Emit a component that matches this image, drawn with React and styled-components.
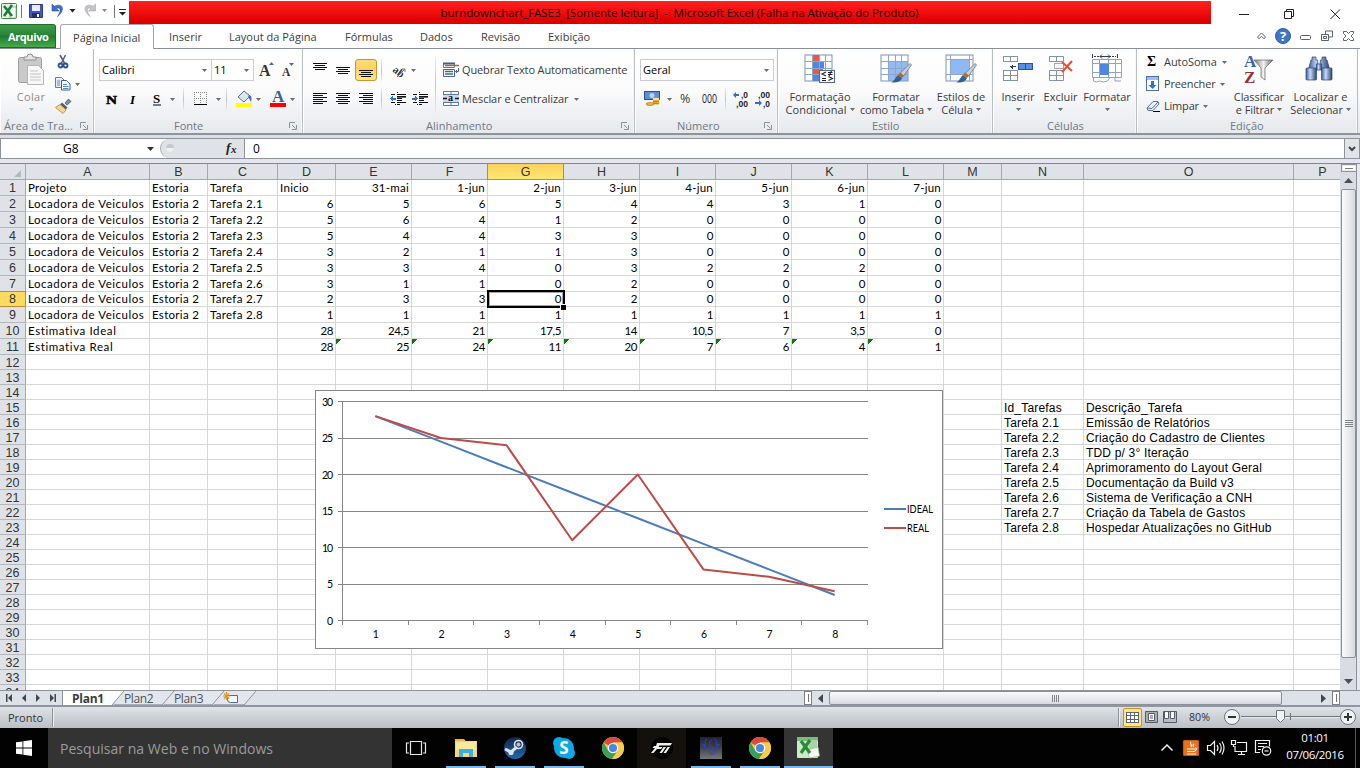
import React from "react";
import styled, { createGlobalStyle, css } from "styled-components";

const UI = `"Open Sans", "Noto Sans", sans-serif`;
const GRID = `Lato, "Open Sans", sans-serif`;
const ARIAL = `"Liberation Sans", Arial, sans-serif`;
const SERIF = `"Liberation Serif", "Times New Roman", serif`;

const Global = createGlobalStyle`
  * { box-sizing: border-box; }
  body { margin: 0; background: #fff; overflow: hidden; }
  svg { display: block; flex: none; overflow: visible; }
`;

const Window = styled.div`
  width: 1360px;
  height: 768px;
  display: flex;
  flex-direction: column;
  overflow: hidden;
  font: 11px/14px ${UI};
  color: #3b3b3b;
  background: #fff;
`;

/* ---------- title bar ---------- */
const TitleBar = styled.header`
  height: 24px;
  display: flex;
  align-items: flex-start;
`;
const QuickAccess = styled.div`
  width: 129px;
  height: 24px;
`;
const Caption = styled.div`
  width: 1082px;
  height: 23px;
  margin-top: 1px;
  background: linear-gradient(#ff2020, #f01010 45%, #dc0000 90%, #d00);
  color: #1c0404;
  font-size: 11.5px;
  line-height: 24px;
  letter-spacing: -0.06px;
  text-align: center;
  white-space: pre;
  padding-left: 19px;
`;
const WindowButtons = styled.div`
  width: 149px;
  height: 24px;
`;

/* ---------- ribbon tabs ---------- */
const TabRow = styled.nav`
  height: 25px;
  display: flex;
  align-items: flex-end;
  border-bottom: 1px solid #8b9097;
`;
const FileTab = styled.div`
  width: 56px;
  height: 24px;
  border-radius: 0 3px 0 0;
  border: 1px solid #1e6b2c;
  border-left: 0;
  background: linear-gradient(#3f9c47, #2a8537 45%, #1f7a2e 50%, #46ac4c);
  color: #fff;
  font-weight: 700;
  line-height: 23px;
  padding-left: 8px;
  letter-spacing: -0.4px;
`;
const RibbonTab = styled.div`
  width: ${(p) => p.$w}px;
  height: 24px;
  line-height: 26px;
  letter-spacing: ${(p) => p.$ls || 0}px;
  white-space: nowrap;
  ${(p) =>
    p.$active &&
    css`
      margin: 0 15px -1px 4px;
      padding-left: 12px;
      height: 25px;
      border: 1px solid #a3a8ae;
      border-bottom: 0;
      border-radius: 3px 3px 0 0;
      background: #fff;
      line-height: 25px;
    `}
`;
const TabTools = styled.div`
  margin-left: auto;
  width: 110px;
  height: 24px;
`;

/* ---------- ribbon ---------- */
const Ribbon = styled.section`
  height: 86px;
  display: flex;
  background: linear-gradient(#fff, #fbfbfc 50%, #eef0f3 78%, #e6e9ed);
  border-bottom: 2px solid #8f949b;
`;
const Group = styled.div`
  width: ${(p) => p.$w}px;
  height: 84px;
  display: flex;
  flex-direction: column;
  border-right: 1px solid #b9bdc4;
  box-shadow: inset -1px 0 #f6f7f9, inset 1px 0 #fff;
`;
const GroupBody = styled.div`
  height: 69px;
  display: flex;
  padding-left: ${(p) => p.$pl || 0}px;
`;
const GroupLabel = styled.div`
  height: 15px;
  display: flex;
  align-items: center;
  justify-content: space-between;
  color: #6f7782;
  padding-right: 5px;
`;
const LabelText = styled.span`
  padding-left: ${(p) => p.$x}px;
  letter-spacing: ${(p) => p.$ls || 0}px;
  white-space: nowrap;
`;
const Stack = styled.div`
  display: flex;
  flex-direction: column;
  width: ${(p) => p.$w}px;
  padding-top: ${(p) => p.$pt || 0}px;
  flex: none;
`;
const Strip = styled.div`
  height: ${(p) => p.$h}px;
  display: grid;
  grid-template-columns: ${(p) => p.$cols};
  align-items: center;
`;
const Combo = styled.div`
  width: ${(p) => p.$w}px;
  height: 22px;
  border: 1px solid #c9ccd1;
  background: #fff;
  display: flex;
  align-items: center;
  justify-content: space-between;
  padding: 0 4px 0 2px;
  color: #000;
`;
const ToggleOn = styled.div`
  width: 22px;
  height: 22px;
  border: 1px solid #c29b29;
  border-radius: 3px;
  background: linear-gradient(#fbdc78, #fdd163 45%, #ffe480);
  display: flex;
  justify-content: center;
  align-items: center;
`;
const Divider = styled.i`
  width: 1px;
  height: ${(p) => p.$h}px;
  background: linear-gradient(#e9ebee, #bfc3c9, #e9ebee);
`;
const Percent = styled.span`
  font-size: 12.5px;
  margin-left: -1px;
`;
const BigButton = styled.div`
  width: ${(p) => p.$w}px;
  flex: none;
  display: flex;
  flex-direction: column;
  align-items: center;
  padding-top: 5px;
  color: ${(p) => (p.$dim ? "#8d8d8d" : "#3b3b3b")};
`;
const BigIcon = styled.div`
  width: 32px;
  height: 36px;
  margin-left: ${(p) => p.$ml || 0}px;
`;
const BigLine = styled.div`
  height: 13px;
  line-height: 13px;
  display: flex;
  align-items: center;
  gap: 3px;
  white-space: nowrap;
  letter-spacing: ${(p) => p.$ls || 0}px;
`;
const MenuLine = styled.div`
  height: 22px;
  display: flex;
  align-items: center;
  white-space: nowrap;
  letter-spacing: ${(p) => p.$ls || 0}px;
`;
const MenuIcon = styled.span`
  width: ${(p) => p.$w}px;
  display: flex;
`;
const ArrowGap = styled.span`
  margin-left: ${(p) => p.$w}px;
`;

/* ---------- formula bar ---------- */
const FormulaBar = styled.div`
  height: 28px;
  display: flex;
  border-top: 3px solid #dcdee6;
  border-bottom: 4px solid #e4e5ee;
  box-shadow: inset 0 1px #8e939b, inset 0 -1px #8e939b;
  background: #fff;
`;
const NameBox = styled.div`
  width: 160px;
  height: 21px;
  border-left: 1px solid #8e939b;
  display: flex;
  align-items: center;
  padding-left: 62px;
  gap: 68px;
  font-size: 12px;
  color: #000;
`;
const FxArea = styled.div`
  width: 85px;
  height: 19px;
  margin-top: 1px;
  border-left: 1px solid #a6abb2;
  border-right: 1px solid #8e939b;
  border-radius: 10px 0 0 10px;
  background: #dfe3e8;
`;
const FormulaText = styled.div`
  flex: 1;
  padding-left: 8px;
  line-height: 21px;
  font-size: 12px;
  color: #000;
`;
const ExpandButton = styled.div`
  width: 16px;
  height: 21px;
  border: 1px solid #8e939b;
  background: #e1e5ea;
  display: flex;
  align-items: center;
  justify-content: center;
`;

/* ---------- worksheet ---------- */
const SheetArea = styled.main`
  height: 527px;
  display: flex;
  border-top: 1px solid #83888f;
`;
const Sheet = styled.div`
  position: relative;
  width: 1340px;
  height: 526px;
  overflow: hidden;
  background: #fff;
`;
const Row = styled.div`
  display: flex;
  width: 1400px;
  height: ${(p) => p.$h}px;
`;
const ColHead = styled.div`
  width: ${(p) => p.$w}px;
  height: 16px;
  border-right: 1px solid #a4a8ad;
  border-bottom: 1px solid #a4a8ad;
  background: #dfe3e8;
  font: 12.5px/16px ${ARIAL};
  text-align: center;
  color: #333;
  ${(p) =>
    p.$on &&
    css`
      background: linear-gradient(#fbd15c, #ffe874);
      border-color: #c28a30;
      box-shadow: -1px 0 #c28a30;
    `}
`;
const RowHead = styled.div`
  width: 26px;
  border-right: 1px solid #a4a8ad;
  border-bottom: 1px solid #b4b8bd;
  background: #dfe3e8;
  font: 12.5px/17px ${ARIAL};
  text-align: center;
  color: #333;
  ${(p) =>
    p.$on &&
    css`
      line-height: 15px;
      background: #ffdb61;
      border-color: #c28a30;
      box-shadow: 0 -1px #c28a30;
    `}
`;
const Cell = styled.div`
  width: ${(p) => p.$w}px;
  border-right: 1px solid #d6d6d6;
  border-bottom: 1px solid #d6d6d6;
  font-family: ${GRID};
  font-size: 11.5px;
  line-height: ${(p) => (p.$short ? 14 : 16)}px;
  letter-spacing: ${(p) => p.$ls ?? 0.3}px;
  padding: 0 2px;
  color: #000;
  white-space: nowrap;
  text-align: ${(p) => (p.$num ? "right" : "left")};
  ${(p) =>
    p.$arial &&
    css`
      font: 12px/16px ${ARIAL};
      letter-spacing: 0.18px;
    `}
  ${(p) =>
    p.$flag &&
    css`
      background: linear-gradient(135deg, #0a7a0a 3.9px, transparent 4px);
    `}
`;
const Selection = styled.div`
  position: absolute;
  left: 487px;
  top: 126px;
  width: 78px;
  height: 18px;
  border: 2px solid #000;
  box-shadow: inset 0 0 0 1px rgba(0, 0, 0, 0.35);
`;
const FillHandle = styled.i`
  position: absolute;
  right: -3px;
  bottom: -4px;
  width: 6px;
  height: 6px;
  background: #000;
  border-left: 1px solid #fff;
  border-top: 1px solid #fff;
`;
const ChartFrame = styled.div`
  position: absolute;
  left: 315px;
  top: 226px;
  width: 628px;
  height: 259px;
  border: 1px solid #868686;
  background: #fff;
`;
const VScroll = styled.div`
  width: 20px;
  height: 526px;
  display: flex;
  flex-direction: column;
  align-items: center;
  background: #d9dde3;
  border-right: 3px solid #e6e8f0;
  box-shadow: inset -1px 0 #8e939b;
`;
const SplitTop = styled.div`
  width: 16px;
  height: 8px;
  border: 1px solid #8e939b;
  background: #fff;
  box-shadow: inset 0 0 0 1px #e6e8ec;
  display: flex;
  align-items: center;
  justify-content: center;
`;
const VButton = styled.div`
  width: 16px;
  height: ${(p) => p.$h}px;
  padding-top: ${(p) => p.$pt || 0}px;
  display: flex;
  align-items: center;
  justify-content: center;
`;
const VThumb = styled.div`
  width: 15px;
  height: 469px;
  border: 1px solid #8b9097;
  border-radius: 2px;
  background: linear-gradient(90deg, #fafbfc, #eceef1 45%, #d5d9df);
  display: flex;
  align-items: center;
  justify-content: center;
`;

/* ---------- sheet tabs ---------- */
const BottomBar = styled.div`
  height: 17px;
  display: flex;
  border-top: 1px solid #8e939b;
  border-bottom: 2px solid #8e95a5;
  background: #dde1e8;
`;
const TabNav = styled.div`
  width: 63px;
  height: 14px;
  border-right: 1px solid #8e939b;
`;
const SheetTab = styled.div`
  position: relative;
  z-index: ${(p) => p.$z};
  width: ${(p) => p.$w}px;
  height: 14px;
  padding-left: ${(p) => p.$pl}px;
  font-size: 12px;
  line-height: 15px;
  letter-spacing: ${(p) => p.$ls}px;
  font-weight: ${(p) => (p.$active ? 700 : 400)};
  color: ${(p) => (p.$active ? "#3d3d3d" : "#4d545d")};
  > svg {
    position: absolute;
    left: 0;
    top: 0;
  }
  > span {
    position: relative;
  }
`;
const HScroll = styled.div`
  margin-left: auto;
  width: 556px;
  height: 14px;
  display: flex;
  align-items: center;
`;
const SplitSide = styled.div`
  width: 8px;
  height: 14px;
  flex: none;
  border: 1px solid #7d8289;
  background: #fff;
  display: flex;
  align-items: center;
  justify-content: center;
`;
const HButton = styled.div`
  width: ${(p) => p.$w}px;
  padding-right: ${(p) => p.$pr || 0}px;
  flex: none;
  display: flex;
  justify-content: ${(p) => (p.$end ? "flex-end" : "center")};
`;
const HThumb = styled.div`
  width: 453px;
  height: 14px;
  flex: none;
  border: 1px solid #8b9097;
  border-radius: 2px;
  background: linear-gradient(#f8f9fb, #e9ecf0 50%, #d6dae0);
  display: flex;
  align-items: center;
  justify-content: center;
`;

/* ---------- status bar ---------- */
const StatusBar = styled.footer`
  height: 21px;
  display: flex;
  align-items: center;
  background: linear-gradient(#dfe2e6, #cdd1d6 50%, #bbbfc4);
  padding-left: 8px;
  color: #333;
`;
const StatusText = styled.span`
  width: 44px;
  line-height: 13px;
  padding-bottom: 1px;
`;
const StatusDivider = styled.i`
  width: 2px;
  height: 19px;
  background: #8e939a;
  border-right: 1px solid #eceef0;
`;
const StatusRight = styled.div`
  margin-left: auto;
  width: 242px;
  height: 21px;
  display: flex;
  align-items: center;
`;
const ViewOn = styled.div`
  width: 19px;
  height: 19px;
  margin: 0 -1px 0 3px;
  border: 1px solid #c2932a;
  border-radius: 2px;
  background: linear-gradient(#fde38c, #ffe680);
  display: flex;
  align-items: center;
  justify-content: center;
`;

/* ---------- taskbar ---------- */
const Taskbar = styled.div`
  height: 40px;
  display: flex;
  background: #020202;
  color: #fff;
`;
const Start = styled.div`
  width: 48px;
  padding: 12px 16px;
`;
const Search = styled.div`
  width: 344px;
  background: #333;
  color: #9b9b9b;
  font-size: 14px;
  line-height: 41px;
  padding-left: 12px;
  letter-spacing: 0.03px;
`;
const TaskButton = styled.div`
  width: 49px;
  height: 40px;
  display: flex;
  flex-direction: column;
  align-items: center;
  padding-top: 8px;
  background: ${(p) => p.$bg || "transparent"};
`;
const RunMark = styled.i`
  width: ${(p) => p.$w || 40}px;
  height: 2px;
  margin-top: 6px;
  background: #76b9ed;
`;
const Tray = styled.div`
  margin-left: auto;
  width: 126px;
`;
const Clock = styled.div`
  width: 60px;
  text-align: center;
  font-size: 11.5px;
  line-height: 17px;
  padding-top: 1px;
  letter-spacing: -0.35px;
`;
const DesktopEdge = styled.div`
  width: 5px;
  margin-left: 10px;
  border-left: 1px solid #555;
`;

/* ---------- small drawings ---------- */
const Caret = ({ c = "#6b6b6b" }) => (
  <svg width="5" height="3" viewBox="0 0 5 3"><path d="M0 0h5L2.500 3z" fill={c} /></svg>
);
const Launcher = () => (
  <svg width="8" height="8" viewBox="0 0 8 8" fill="none" stroke="#8d939b">
    <path d="M.5 6V.5H6" /><path d="M3 3l3.500 3.500M7.500 3v4.500H3" />
  </svg>
);
/* Text-line glyph: long and short strokes two pixels apart. */
const Lines = ({ n = 6, top = 0, align = "c" }) => (
  <svg width="14" height="12" shapeRendering="crispEdges">
    {Array.from({ length: n }, (_, i) => {
      const w = i % 2 ? 10 : 14;
      const x = align === "l" ? 0 : align === "r" ? 14 - w : (14 - w) / 2;
      return <rect key={i} x={x} y={top + i * 2} width={w} height="1" fill="#111" />;
    })}
  </svg>
);
const Indent = ({ dir }) => (
  <svg width="16" height="14" shapeRendering="crispEdges">
    <path d="M1 2.500h4M7 2.500h9M7 4.500h9M7 6.500h5M7 8.500h5M1 10.500h4M7 10.500h9M7 12.500h3M7 .5h1M5 12.500h1" stroke="#111" />
    <path d="M7 5.500h9" stroke="#111" strokeOpacity=".6" />
    <path d={dir === "l" ? "M0 6.500l3-3v2h3v2H3v2z" : "M6 6.500l-3-3v2H0v2h3v2z"} fill="#2f6fc4" />
  </svg>
);
const ExcelSmall = () => (
  <g>
    <rect x="1.500" y="3.500" width="15" height="15" rx="1" fill="#e3f1e1" stroke="#3b8a45" />
    <path d="M10 7h6v11h-6z" fill="#fff" stroke="#79b37f" strokeWidth=".8" />
    <path d="M4 6l8 10M12 5L4 16" stroke="#1f7a35" strokeWidth="2.600" />
  </g>
);
const Grid32 = ({ children, over }) => (
  <svg width="32" height="32">
    <rect x="1" y="1" width="27" height="26" fill="#fff" stroke="#7d93b5" />
    {children}
    <path d="M1 7.500h27M1 14.500h27M1 20.500h27M8.500 1v26M15.500 1v26M21.500 1v26" stroke="#8ea6cc" fill="none" />
    {over}
  </svg>
);
const Brush = () => (
  <g>
    <path d="M30 9.500l1.500 1.500-8 11-3.500-2.500z" fill="#c7d0da" stroke="#66758a" strokeWidth=".8" />
    <path d="M20 18.500l4 3-2 2.500-4-3z" fill="#b06a2c" />
    <path d="M18 21l4 3.200c-2 4-6 5-11 4 4-1 4-5 7-7.200z" fill="#35608f" />
  </g>
);
const Binoculars = () => (
  <svg width="32" height="32">
    <defs>
      <linearGradient id="bino"><stop offset="0" stopColor="#3c5c94" /><stop offset=".4" stopColor="#c9d9f2" /><stop offset="1" stopColor="#27457c" /></linearGradient>
    </defs>
    <g fill="url(#bino)" stroke="#28427a" strokeWidth=".7">
      <path d="M7 3h4v3h1.500l1 9H3.500L6 6h1zM17 3h4v3h1l2.500 9H14.500l1-9H17z" />
      <rect x="1" y="14" width="10.500" height="12" rx="1" /><rect x="16.500" y="14" width="10.500" height="12" rx="1" />
      <rect x="11.500" y="10" width="5" height="6" />
    </g>
  </svg>
);
const Chrome = () => (
  <svg width="24" height="24" viewBox="0 0 24 24">
    <circle cx="12" cy="12" r="11" fill="#f4c53a" />
    <path d="M12 12L2.500 6.500A11 11 0 0 1 21.500 6.500H12z" fill="#dc4a3c" />
    <path d="M2.500 6.500A11 11 0 0 0 11 22.950L16.700 14.700 12 12 7.300 14.700z" fill="#34a058" />
    <path d="M21.500 6.500H12l4.700 8.200L11 22.950A11 11 0 0 0 21.500 6.500z" fill="#f8cc45" />
    <circle cx="12" cy="12" r="5.200" fill="#fff" /><circle cx="12" cy="12" r="4.100" fill="#4a86e8" />
  </svg>
);

/* ---------- data ---------- */
const COLS = [["A", 124], ["B", 58], ["C", 70], ["D", 58], ["E", 76], ["F", 76], ["G", 76], ["H", 76], ["I", 76], ["J", 76], ["K", 76], ["L", 76], ["M", 58], ["N", 82], ["O", 210], ["P", 58]];
const P = "Locadora de Veiculos";
const S = "Estoria 2";
const DATA = {
  1: ["Projeto", "Estoria", "Tarefa", "Inicio", "31-mai", "1-jun", "2-jun", "3-jun", "4-jun", "5-jun", "6-jun", "7-jun"],
  2: [P, S, "Tarefa 2.1", 6, 5, 6, 5, 4, 4, 3, 1, 0],
  3: [P, S, "Tarefa 2.2", 5, 6, 4, 1, 2, 0, 0, 0, 0],
  4: [P, S, "Tarefa 2.3", 5, 4, 4, 3, 3, 0, 0, 0, 0],
  5: [P, S, "Tarefa 2.4", 3, 2, 1, 1, 3, 0, 0, 0, 0],
  6: [P, S, "Tarefa 2.5", 3, 3, 4, 0, 3, 2, 2, 2, 0],
  7: [P, S, "Tarefa 2.6", 3, 1, 1, 0, 2, 0, 0, 0, 0],
  8: [P, S, "Tarefa 2.7", 2, 3, 3, 0, 2, 0, 0, 0, 0],
  9: [P, S, "Tarefa 2.8", 1, 1, 1, 1, 1, 1, 1, 1, 1],
  10: ["Estimativa Ideal", "", "", 28, "24,5", 21, "17,5", 14, "10,5", 7, "3,5", 0],
  11: ["Estimativa Real", "", "", 28, 25, 24, 11, 20, 7, 6, 4, 1],
};
const TASKS = [
  ["Id_Tarefas", "Descrição_Tarefa"],
  ["Tarefa 2.1", "Emissão de Relatórios"],
  ["Tarefa 2.2", "Criação do Cadastro de Clientes"],
  ["Tarefa 2.3", "TDD p/ 3° Iteração"],
  ["Tarefa 2.4", "Aprimoramento do Layout Geral"],
  ["Tarefa 2.5", "Documentação da Build v3"],
  ["Tarefa 2.6", "Sistema de Verificação a CNH"],
  ["Tarefa 2.7", "Criação da Tabela de Gastos"],
  ["Tarefa 2.8", "Hospedar Atualizações no GitHub"],
];
TASKS.forEach(([id, d], i) => {
  DATA[15 + i] = [...Array(13).fill(""), id, d];
});
const rowHeight = (n) => (n <= 11 && n !== 8 ? 16 : 15);
const spacing = (n, i, num) => {
  if (num) return n === 1 ? 0.25 : -0.4;
  return i === 0 && n > 1 ? (n > 9 ? 0.6 : 0.52) : 0.3;
};

const IDEAL = [28, 24.5, 21, 17.5, 14, 10.5, 7, 3.5];
const REAL = [28, 25, 24, 11, 20, 7, 6, 4];
const px = (i) => 26.5 + 65.625 * (i + 0.5);
const py = (v) => 229.5 - v * 7.3;
const points = (a) => a.map((v, i) => `${px(i)},${py(v)}`).join(" ");

function Chart() {
  return (
    <ChartFrame>
      <svg width="626" height="257" fontFamily={`Lato, "Open Sans", sans-serif`} fontSize="10.500" fill="#000">
        <g stroke="#868686" shapeRendering="crispEdges">
          {[0, 5, 10, 15, 20, 25, 30].map((v) => (
            <line key={v} x1="22" x2="552" y1={Math.floor(py(v)) + 0.5} y2={Math.floor(py(v)) + 0.5} />
          ))}
          <line x1="26.500" x2="26.500" y1="10" y2="234" />
          {[1, 2, 3, 4, 5, 6, 7, 8].map((i) => (
            <line key={i} x1={Math.floor(26.5 + 65.625 * i) + 0.5} x2={Math.floor(26.5 + 65.625 * i) + 0.5} y1="229" y2="234" />
          ))}
        </g>
        {[0, 5, 10, 15, 20, 25, 30].map((v) => (
          <text key={v} x="17" y={py(v) + 4} textAnchor="end" textLength={v > 5 ? 11 : undefined}>{v}</text>
        ))}
        {IDEAL.map((_, i) => (
          <text key={i} x={px(i) + 0.5} y="247" textAnchor="middle">{i + 1}</text>
        ))}
        <g fill="none" strokeWidth="2" strokeLinejoin="round">
          <polyline points={points(IDEAL)} stroke="#4a7ebb" />
          <polyline points={points(REAL)} stroke="#be4b48" />
          <path d="M568 118h22" stroke="#4a7ebb" /><path d="M568 137h22" stroke="#be4b48" />
        </g>
        <text x="591" y="121.500" textLength="26" lengthAdjust="spacingAndGlyphs">IDEAL</text>
        <text x="591" y="140.500" textLength="22" lengthAdjust="spacingAndGlyphs">REAL</text>
      </svg>
    </ChartFrame>
  );
}

function Worksheet() {
  return (
    <SheetArea>
      <Sheet>
        <Row $h={16}>
          <ColHead $w={26}>
            <svg width="25" height="15"><path d="M21 6v7h-7z" fill="#b4b9bf" /></svg>
          </ColHead>
          {COLS.map(([c, w]) => <ColHead key={c} $w={w} $on={c === "G"}>{c}</ColHead>)}
        </Row>
        {Array.from({ length: 34 }, (_, k) => k + 1).map((n) => (
          <Row key={n} $h={rowHeight(n)}>
            <RowHead $on={n === 8}>{n}</RowHead>
            {COLS.map(([c, w], i) => {
              const v = DATA[n]?.[i] ?? "";
              const num = i >= 3 && i < 12 && !(n === 1 && i === 3);
              return (
                <Cell key={c} $w={w} $num={num} $ls={spacing(n, i, num)} $short={n === 8} $arial={n > 14} $flag={n === 11 && i > 3 && i < 12}>{v}</Cell>
              );
            })}
          </Row>
        ))}
        <Selection><FillHandle /></Selection>
        <Chart />
      </Sheet>
      <VScroll>
        <SplitTop><svg width="8" height="1"><rect width="8" height="1" fill="#777" /></svg></SplitTop>
        <VButton $h={17}><svg width="9" height="5"><path d="M0 5h9L4.500 0z" fill="#4a4f55" /></svg></VButton>
        <VThumb>
          <svg width="8" height="7" shapeRendering="crispEdges"><path d="M0 .5h8M0 2.500h8M0 4.500h8M0 6.500h8" stroke="#82878e" /></svg>
        </VThumb>
        <VButton $h={32} $pt={14}><svg width="9" height="5"><path d="M0 0h9L4.500 5z" fill="#4a4f55" /></svg></VButton>
      </VScroll>
    </SheetArea>
  );
}

function RibbonBar() {
  return (
    <Ribbon>
      <Group $w={94}>
        <GroupBody $pl={7}>
          <BigButton $w={48} $dim>
            <BigIcon>
              <svg width="32" height="32">
                <rect x="3.500" y="3.500" width="23" height="25" rx="2" fill="#c9c9c9" stroke="#9e9e9e" />
                <path d="M9 6V3h3a3 3 0 0 1 6 0h3v3z" fill="#e5e5e5" stroke="#8f8f8f" />
                <path d="M12.500 11.500h11l5 5v14h-16z" fill="#f7f7f7" stroke="#b5b5b5" />
                <path d="M15 17h8M15 20h11M15 23h11M15 26h11" stroke="#c6c6c6" />
              </svg>
            </BigIcon>
            <BigLine $ls={0.3}>Colar</BigLine>
            <BigLine><Caret c="#a8a8a8" /></BigLine>
          </BigButton>
          <Stack $w={36} $pt={2}>
            <Strip $h={22} $cols="24px 1fr">
              <svg width="16" height="16"><path d="M5 1l5 9M10.500 1L6 10" stroke="#51657f" strokeWidth="1.600" /><circle cx="5.500" cy="11.500" r="2" fill="none" stroke="#24509a" strokeWidth="1.800" /><circle cx="10.500" cy="11.500" r="2" fill="none" stroke="#24509a" strokeWidth="1.800" /></svg>
            </Strip>
            <Strip $h={22} $cols="20px 1fr">
              <svg width="16" height="16"><path d="M.5 1.500h6l3 3v7h-9z" fill="#e4edf9" stroke="#5b7fb5" /><path d="M6.500 4.500h5l3.500 3.500v6H6.500z" fill="#fff" stroke="#345f9e" /><path d="M8 8.500h4M8 10.500h5.500M8 12.500h5.500M2 5h3M2 7h3M2 9h3" stroke="#5b8fd0" /></svg>
              <Caret />
            </Strip>
            <Strip $h={22} $cols="24px 1fr">
              <svg width="17" height="16"><path d="M10 5l3.500-4 2.500 2.500-4 3.500z" fill="#7c8fae" stroke="#3f5574" strokeWidth=".8" /><path d="M7 4.500l5.500 5-1.500 2-6-5z" fill="#555b66" /><path d="M5 6.500l6 5.500-3 3.500L.5 9.500z" fill="#f1d694" stroke="#b08a3e" strokeWidth=".8" /></svg>
            </Strip>
          </Stack>
        </GroupBody>
        <GroupLabel><LabelText $x={4} $ls={0.1}>Área de Tra...</LabelText><Launcher /></GroupLabel>
      </Group>

      <Group $w={209}>
        <GroupBody $pl={5}>
          <Stack $w={200} $pt={10}>
            <Strip $h={22} $cols="112px 48px 23px 1fr">
              <Combo $w={113}><span>Calibri</span><Caret /></Combo>
              <Combo $w={43}><span>11</span><Caret /></Combo>
              <svg width="16" height="18"><text x="0" y="15" fontFamily={SERIF} fontSize="16" fontWeight="700" fill="#333">A</text><path d="M10 4l2.500-3L15 4z" fill="#3e6db5" /></svg>
              <svg width="16" height="18"><text x="0" y="15" fontFamily={SERIF} fontSize="11.500" fontWeight="700" fill="#333">A</text><path d="M7 2h5l-2.500 3z" fill="#3e6db5" /></svg>
            </Strip>
            <Strip $h={36} $cols="7px 23px 24px 17px 13px 11px 22px 10px 10px 20px 14px 20px 1fr">
              <i />
              <svg width="12" height="12"><text x="0" y="10.500" fontFamily={SERIF} fontSize="13" fontWeight="700" textLength="11" lengthAdjust="spacingAndGlyphs" stroke="#000" strokeWidth=".5">N</text></svg>
              <svg width="10" height="12"><text x="1" y="10.500" fontFamily={SERIF} fontSize="13" fontStyle="italic" fontWeight="700">I</text></svg>
              <svg width="10" height="14"><text x="0" y="11" fontFamily={SERIF} fontSize="13" fontWeight="700">S</text><path d="M0 13h8" stroke="#000" /></svg>
              <Caret />
              <Divider $h={22} />
              <svg width="14" height="14" shapeRendering="crispEdges"><path d="M.5 0v13M6.500 0v13M12.500 0v13M0 .5h13M0 6.500h13" stroke="#888" strokeDasharray="1 1" /><path d="M0 12.500h13" stroke="#000" /></svg>
              <Caret />
              <Divider $h={22} />
              <svg width="17" height="18"><path d="M2 7l6-6 6 5-6 6z" fill="#dbe6f5" stroke="#506d97" /><path d="M13 5c3 1 3 4 2 7-1-2-2-4-3-5z" fill="#3b6fc0" /><path d="M0 13h16v4H0z" fill="#ff0" /></svg>
              <Caret />
              <svg width="16" height="18"><text x="2" y="12" fontFamily={SERIF} fontSize="17" fontWeight="700" fill="#3f5f94">A</text><path d="M0 13h16v4H0z" fill="red" /></svg>
              <Caret />
            </Strip>
          </Stack>
        </GroupBody>
        <GroupLabel><LabelText $x={80}>Fonte</LabelText><Launcher /></GroupLabel>
      </Group>

      <Group $w={332}>
        <GroupBody $pl={10}>
          <Stack $w={122} $pt={10}>
            <Strip $h={22} $cols="23px 19px 26px 10px 20px 1fr">
              <Lines n={4} top={-1} />
              <Lines n={4} top={3} />
              <ToggleOn><Lines n={4} top={6} /></ToggleOn>
              <Divider $h={22} />
              <svg width="16" height="16"><text transform="translate(1 9) rotate(38)" fontFamily={SERIF} fontSize="11" fontWeight="700" fill="#333">ab</text><path d="M6 15l8-8M11 7h3v3" stroke="#777" fill="none" /></svg>
              <Caret />
            </Strip>
            <Strip $h={36} $cols="23px 23px 22px 9px 22px 1fr">
              <Lines align="l" /><Lines /><Lines align="r" />
              <Divider $h={22} />
              <Indent dir="l" /><Indent dir="r" />
            </Strip>
          </Stack>
          <Stack $w={8} $pt={8}><Divider $h={56} /></Stack>
          <Stack $w={190} $pt={10}>
            <Strip $h={22} $cols="19px 1fr">
              <svg width="18" height="16"><path d="M.5 1.500h11v4H.5z" fill="#fff" stroke="#5b79a6" /><path d="M.5 7.500h11v7H.5z" fill="#fff" stroke="#44679d" /><path d="M0 1.500h12" stroke="#3d5f96" strokeWidth="2" /><path d="M2 3.500h14" stroke="#b5652b" strokeWidth="1.500" /><path d="M2 9.500h8M2 12h8" stroke="#44679d" strokeWidth="1.300" /><path d="M15.500 6v3.500h-3M14 8l-1.500 1.500L14 11" stroke="#44679d" fill="none" /></svg>
              <MenuLine $ls={-0.14}>Quebrar Texto Automaticamente</MenuLine>
            </Strip>
            <Strip $h={36} $cols="19px 112px 1fr">
              <svg width="18" height="16"><path d="M.5 .5h15v14H.5z" fill="#fff" stroke="#5b79a6" /><path d="M0 4h16v7H0z" fill="#c9daf2" /><path d="M.5 3.500h15M.5 11.500h15M8 0v3.500M8 11.500V15" stroke="#5b79a6" /><text x="5" y="10" fontFamily={SERIF} fontSize="10" fontWeight="700" fill="#111">a</text><path d="M0 7.500h4M12 7.500h4" stroke="#111" strokeWidth="1.500" /></svg>
              <MenuLine $ls={-0.05}>Mesclar e Centralizar</MenuLine>
              <Caret />
            </Strip>
          </Stack>
        </GroupBody>
        <GroupLabel><LabelText $x={123} $ls={0.05}>Alinhamento</LabelText><Launcher /></GroupLabel>
      </Group>

      <Group $w={143}>
        <GroupBody $pl={5}>
          <Stack $w={134} $pt={10}>
            <Combo $w={134}><span>Geral</span><Caret /></Combo>
            <Strip $h={36} $cols="4px 23px 14px 21px 23px 8px 22px 1fr">
              <i />
              <svg width="17" height="16"><rect x=".5" y="0.500" width="15" height="8" fill="#5f8fd6" stroke="#27508f" /><circle cx="8" cy="4.500" r="2.500" fill="#b9d2f5" /><path d="M9 7.500h6v6H9z" fill="#e5a726" /><ellipse cx="12" cy="8" rx="3.300" ry="1.300" fill="#ffe08a" /><path d="M9 10.500h6M9 12.500h6" stroke="#a87414" strokeWidth=".6" /><ellipse cx="6" cy="13" rx="4" ry="1.600" fill="#e9b43a" stroke="#a87414" strokeWidth=".6" /></svg>
              <Caret />
              <Percent>%</Percent>
              <svg width="16" height="14"><text x="0" y="11" fontFamily={UI} fontSize="12" fill="#222" textLength="15" lengthAdjust="spacingAndGlyphs">000</text></svg>
              <Divider $h={22} />
              {["l", "r"].map((d) => (
                <svg key={d} width="16" height="16" fontFamily={ARIAL} fontSize="8.500" fill="#222" fontWeight="700">
                  <text x={d === "l" ? 8 : 3} y="6.500" textLength={d === "l" ? 7 : 12} lengthAdjust="spacingAndGlyphs">{d === "l" ? ",0" : ",00"}</text>
                  <text x={d === "l" ? 3 : 8} y="15.500" textLength={d === "l" ? 12 : 7} lengthAdjust="spacingAndGlyphs">{d === "l" ? ",00" : ",0"}</text>
                  <path d={d === "l" ? "M0 4l3-3v2h3v2H3v2z" : "M7 12L4 9v2H0v2h4v2z"} fill="#2f6fc4" />
                </svg>
              ))}
            </Strip>
          </Stack>
        </GroupBody>
        <GroupLabel><LabelText $x={42}>Número</LabelText><Launcher /></GroupLabel>
      </Group>

      <Group $w={215}>
        <GroupBody $pl={4}>
          <BigButton $w={76}>
            <BigIcon>
              <Grid32
                over={
                  <g fill="none" stroke="#222" strokeWidth="1.100">
                    <rect x="15.500" y="16.500" width="15" height="12" fill="#fff" stroke="#5a6a85" />
                    <path d="M22 18l-4 2 4 2M18 24.500h4M18 26.500h4M24 18.500h4.500M24 20.500h4.500M27.500 17l-2.500 5M24.500 22.500l4 2-4 2" />
                  </g>
                }
              >
                <path d="M8 1h7v26H8z" fill="#e8594a" /><path d="M8 7h12v7H8z" fill="#4f86e0" /><path d="M15 14h4v6h-4z" fill="#e8594a" /><path d="M8 20h7v7H8z" fill="#4f86e0" />
              </Grid32>
            </BigIcon>
            <BigLine $ls={0}>Formatação</BigLine>
            <BigLine $ls={0.1}>Condicional <Caret /></BigLine>
          </BigButton>
          <BigButton $w={76}>
            <BigIcon><Grid32 over={<Brush />}><path d="M8 8h20v19H8z" fill="#7aa7ee" opacity=".8" /></Grid32></BigIcon>
            <BigLine>Formatar</BigLine>
            <BigLine $ls={-0.12}>como Tabela <Caret /></BigLine>
          </BigButton>
          <BigButton $w={54}>
            <BigIcon>
              <svg width="32" height="32"><rect x="1" y="1" width="27" height="26" fill="#fff" stroke="#7d93b5" /><path d="M6 6h19v14H6z" fill="#8fb8f4" /><path d="M1 5.500h27M1 20.500h27M5.500 1v26M24.500 1v26" stroke="#8ea6cc" /><Brush /></svg>
            </BigIcon>
            <BigLine>Estilos de</BigLine>
            <BigLine>Célula <Caret /></BigLine>
          </BigButton>
        </GroupBody>
        <GroupLabel><LabelText $x={94}>Estilo</LabelText></GroupLabel>
      </Group>

      <Group $w={144}>
        <GroupBody $pl={4}>
          <BigButton $w={42}>
            <BigIcon><svg width="32" height="32" shapeRendering="crispEdges"><path d="M1.500 2.500h14v5h-14zM8.500 2.500v5M1.500 16.500h14v10h-14zM8.500 16.500v10M1.500 21.500h14" fill="#fff" stroke="#8291a8" /><path d="M16.500 9.500h14v6h-14z" fill="#5d8fe0" stroke="#2d5496" /><path d="M23.500 9v7" stroke="#2d5496" /><path d="M8 12.500h6M10 10.500v4M9 11.500v2" stroke="#333f57" /></svg></BigIcon>
            <BigLine>Inserir</BigLine><BigLine><Caret /></BigLine>
          </BigButton>
          <BigButton $w={43}>
            <BigIcon $ml={6}><svg width="32" height="32"><path d="M1.500 2.500h14v5h-14zM8.500 2.500v5M1.500 16.500h14v10h-14zM8.500 16.500v10M1.500 21.500h14" fill="#fff" stroke="#8291a8" /><path d="M6.500 9.500h9v5h-9z" fill="none" stroke="#444f6b" strokeDasharray="1 1" /><path d="M14 8l10 9M24 7L14 18" stroke="#ee4a2c" strokeWidth="2" /></svg></BigIcon>
            <BigLine>Excluir</BigLine><BigLine><Caret /></BigLine>
          </BigButton>
          <BigButton $w={50}>
            <BigIcon><svg width="32" height="32"><path d="M1.500 5.500h29v18h-29zM1.500 9.500h29M1.500 18.500h29M8.500 5.500v18M17.500 5.500v18M24.500 5.500v18" fill="#fff" stroke="#93a3bb" /><path d="M9 10h9v11H9z" fill="#4f86e0" /><path d="M2.500 24v3q3 2 6 0 4 2 8 0l2-3M24 24v3h6" fill="none" stroke="#93a3bb" /><path d="M1.500 0v4M26.500 0v4" stroke="#333f57" /><path d="M3 2.500h22" stroke="#333f57" strokeDasharray="2 1" /><path d="M9 2.500h10M11 .5l-2 2 2 2M17 .5l2 2-2 2" stroke="#333f57" fill="none" /></svg></BigIcon>
            <BigLine>Formatar</BigLine><BigLine><Caret /></BigLine>
          </BigButton>
        </GroupBody>
        <GroupLabel><LabelText $x={54}>Células</LabelText></GroupLabel>
      </Group>

      <Group $w={221}>
        <GroupBody $pl={9}>
          <Stack $w={83} $pt={2}>
            <MenuLine $ls={-0.05}><MenuIcon $w={18}><svg width="14" height="14"><text x="1" y="11" fontFamily={SERIF} fontSize="14" fontWeight="700" fill="#000">Σ</text></svg></MenuIcon>AutoSoma<ArrowGap $w={5} /><Caret /></MenuLine>
            <MenuLine $ls={-0.15}><MenuIcon $w={18}><svg width="14" height="16"><rect x=".5" y=".5" width="12" height="14" fill="#fff" stroke="#4a6fae" /><path d="M1 1h11v3H1z" fill="#9fc0ee" /><path d="M5 5h3v4h2.500L6.500 13 2.500 9H5z" fill="#2f6fd6" /></svg></MenuIcon>Preencher<ArrowGap $w={4} /><Caret /></MenuLine>
            <MenuLine $ls={-0.2}><MenuIcon $w={18}><svg width="14" height="12"><path d="M1 8l6-6.500h5L13 4l-6 6.500H2z" fill="#e9f0fb" stroke="#5472a3" /><path d="M1 8l5 .5 6-6.500" stroke="#5472a3" fill="none" /><path d="M7 11.500h7" stroke="#000" /></svg></MenuIcon>Limpar<ArrowGap $w={4} /><Caret /></MenuLine>
          </Stack>
          <BigButton $w={60}>
            <BigIcon>
              <svg width="32" height="32" fontFamily={SERIF} fontWeight="700" fontSize="18">
                <defs><linearGradient id="fun"><stop offset="0" stopColor="#777" /><stop offset=".5" stopColor="#f2f2f2" /><stop offset="1" stopColor="#666" /></linearGradient></defs>
                <text x="1" y="13" fontSize="17" fill="#3a62a8">A</text><text x="1" y="29" fontSize="17" fill="#9c2f2f">Z</text>
                <path d="M11 6h19l-8 8v12l-4-3v-9z" fill="url(#fun)" stroke="#666" strokeWidth=".7" />
              </svg>
            </BigIcon>
            <BigLine $ls={-0.1}>Classificar</BigLine>
            <BigLine $ls={-0.1}>e Filtrar <Caret /></BigLine>
          </BigButton>
          <BigButton $w={63}>
            <BigIcon><Binoculars /></BigIcon>
            <BigLine $ls={-0.02}>Localizar e</BigLine>
            <BigLine $ls={-0.05}>Selecionar <Caret /></BigLine>
          </BigButton>
        </GroupBody>
        <GroupLabel><LabelText $x={93}>Edição</LabelText></GroupLabel>
      </Group>
    </Ribbon>
  );
}

const TabShape = ({ w, active }) => (
  <svg width={w} height="14">
    <path d={active ? `M0 0H${w + 11}L${w - 1} 14H0z` : `M-1 0H${w + 11}L${w - 1} 14H1Q-3 12 -1 8z`} fill={active ? "#fff" : "#e3e6ec"} />
    <path d={`M${w - 1} 14L${w + 11} 0`} stroke="#8e939b" fill="none" />
    {!active && <path d={`M1 13.500H${w - 1}M1 13.500Q-2 12 0 9`} stroke="#a9aeb5" fill="none" />}
  </svg>
);

export default function App() {
  return (
    <>
      <Global />
      <Window>
        <TitleBar>
          <QuickAccess>
            <svg width="129" height="24">
              <ExcelSmall />
              <path d="M21.500 5v13" stroke="#777" />
              <path d="M29.500 4.500h13v13h-13z" fill="#4256c8" stroke="#2c3a94" /><path d="M32 5h8v6h-8z" fill="#e9eefb" /><path d="M32 13h8v5h-8z" fill="#23306f" /><path d="M37 14h2v3h-2z" fill="#fff" />
              <path d="M52 4v7h7l-2.500-2.300c3.500-2.200 5.500 1.300 1 7.800 7.500-5.500 6.500-14.500-3.200-10.200z" fill="#3d6fc8" stroke="#2b56a5" strokeWidth=".6" />
              <path d="M69.500 9h6l-3 3.500z" fill="#222" />
              <path d="M95.500 4v7h-7l2.500-2.300c-3.500-2.200-5.500 1.300-1 7.800-7.500-5.500-6.500-14.500 3.200-10.200z" fill="#c3c5c9" stroke="#a3a6ab" strokeWidth=".6" />
              <path d="M102 9h5l-2.500 3z" fill="#888" />
              <path d="M114.500 5v13" stroke="#777" />
              <path d="M119 9.500h7" stroke="#222" /><path d="M119 12h7l-3.500 3.500z" fill="#222" />
            </svg>
          </QuickAccess>
          <Caption>{"burndownchart_FASE3  [Somente leitura]  -  Microsoft Excel (Falha na Ativação do Produto)"}</Caption>
          <WindowButtons>
            <svg width="149" height="24" fill="none" stroke="#222">
              <path d="M28 14.500h10" />
              <path d="M73.500 11.500h7v7h-7zM75.500 11.500v-2h7v7h-2" />
              <path d="M119.500 9.500l9.500 9.500M129 9.500L119.500 19" />
            </svg>
          </WindowButtons>
        </TitleBar>

        <TabRow>
          <FileTab>Arquivo</FileTab>
          <RibbonTab $active $w={94} $ls={0.05}>Página Inicial</RibbonTab>
          <RibbonTab $w={60}>Inserir</RibbonTab>
          <RibbonTab $w={116}>Layout da Página</RibbonTab>
          <RibbonTab $w={75}>Fórmulas</RibbonTab>
          <RibbonTab $w={61}>Dados</RibbonTab>
          <RibbonTab $w={67}>Revisão</RibbonTab>
          <RibbonTab $w={60}>Exibição</RibbonTab>
          <TabTools>
            <svg width="110" height="24" fill="none" stroke="#59616c">
              <path d="M7.500 13L11.500 9l4 4-1.500 1.800-2.500-2.500L9 14.800z" />
              <circle cx="33" cy="12" r="7.500" fill="#3f74c6" stroke="#2e5ba6" />
              <text x="33" y="16.500" textAnchor="middle" fill="#fff" stroke="none" fontFamily={UI} fontWeight="700" fontSize="13">?</text>
              <rect x="50.500" y="11.500" width="10" height="4" rx="1" />
              <path d="M71.500 10.500h7v6h-7zM73.500 12.500h3v2h-3zM75.500 10v-3h7v6h-3.500" />
              <path d="M93.500 7.500h3l2 2 2-2h3v2l-2.500 2.500 2.500 2.500v2h-3l-2-2-2 2h-3v-2l2.500-2.500-2.500-2.500z" />
            </svg>
          </TabTools>
        </TabRow>

        <RibbonBar />

        <FormulaBar>
          <NameBox><span>G8</span><svg width="7" height="4"><path d="M0 0h7L3.500 4z" fill="#333" /></svg></NameBox>
          <FxArea>
            <svg width="83" height="19">
              <circle cx="9" cy="9" r="4" fill="#c4c9cf" /><path d="M5 9a4 4 0 0 0 8 0" fill="#eef0f2" />
              <text x="65" y="13" fontFamily={SERIF} fontStyle="italic" fontWeight="700" fontSize="13.500" fill="#222">f</text>
              <text x="70" y="14" fontFamily={SERIF} fontStyle="italic" fontWeight="700" fontSize="11" fill="#222">x</text>
            </svg>
          </FxArea>
          <FormulaText>0</FormulaText>
          <ExpandButton><svg width="8" height="6"><path d="M1 1l3 3 3-3" stroke="#444" strokeWidth="2" fill="none" /></svg></ExpandButton>
        </FormulaBar>

        <Worksheet />

        <BottomBar>
          <TabNav>
            <svg width="62" height="14" fill="#42474e"><path d="M6 3h1.500v8H6zM12 3v8L8 7zM26 3v8l-4-4zM36 3v8l4-4zM50 3v8l4-4zM54.500 3H56v8h-1.500z" /></svg>
          </TabNav>
          <SheetTab $active $z={4} $w={50} $pl={9} $ls={-0.25}><TabShape w={50} active /><span>Plan1</span></SheetTab>
          <SheetTab $z={3} $w={50} $pl={11} $ls={-0.4}><TabShape w={50} /><span>Plan2</span></SheetTab>
          <SheetTab $z={2} $w={50} $pl={11} $ls={-0.4}><TabShape w={50} /><span>Plan3</span></SheetTab>
          <SheetTab $z={1} $w={32} $pl={12}>
            <TabShape w={32} />
            <svg width="32" height="14"><path d="M14.500 4.500h10v7h-7q-3 0-3-3z" fill="#f4f7fc" stroke="#54698c" /><path d="M13.500 1v8M10 5h7.500M11 2.500l5 5M16 2.500l-5 5" stroke="#e09a2c" strokeWidth="1.200" /></svg>
          </SheetTab>
          <HScroll>
            <SplitSide><svg width="1" height="8"><rect width="1" height="8" fill="#777" /></svg></SplitSide>
            <HButton $w={17}><svg width="5" height="9"><path d="M5 0v9L0 4.500z" fill="#42474e" /></svg></HButton>
            <HThumb><svg width="7" height="7" shapeRendering="crispEdges"><path d="M.5 0v7M2.500 0v7M4.500 0v7M6.500 0v7" stroke="#82878e" /></svg></HThumb>
            <HButton $w={50} $pr={6} $end><svg width="5" height="9"><path d="M0 0v9l5-4.500z" fill="#42474e" /></svg></HButton>
            <SplitSide><svg width="1" height="8"><rect width="1" height="8" fill="#777" /></svg></SplitSide>
          </HScroll>
        </BottomBar>

        <StatusBar>
          <StatusText>Pronto</StatusText>
          <StatusDivider />
          <StatusRight>
            <StatusDivider />
            <ViewOn><svg width="13" height="11" shapeRendering="crispEdges"><path d="M.5 .5h12v10H.5zM.5 3.500h12M.5 7.500h12M4.500 .5v10M8.500 .5v10" fill="#fff" stroke="#5c6270" /></svg></ViewOn>
            <svg width="217" height="21">
              <g fill="#e4e6e9" stroke="#555b66">
                <path d="M4.500 4.500h12v11h-12z" fill="#a9adb4" /><path d="M7.500 6.500h6v7h-6z" fill="#fff" /><path d="M9 9h3M9 11h3" />
                <path d="M22.500 4.500h13v11h-13z" fill="#b9bdc3" /><path d="M23.500 4.500h4v7h-4zM29.500 4.500h4v7h-4z" fill="#fff" />
              </g>
              <text x="48" y="13.500" fontFamily={UI} fontSize="11" fill="#333" textLength="21" lengthAdjust="spacingAndGlyphs">80%</text>
              <path d="M100 9.500h100" stroke="#6f747b" /><path d="M100 10.500h100" stroke="#e8eaed" />
              <path d="M149.500 6v7" stroke="#6f747b" />
              <g fill="#f1f2f4" stroke="#6f747b">
                <circle cx="91" cy="10" r="7.500" /><circle cx="207" cy="10" r="7.500" />
                <path d="M135.500 3.500h8v8l-4 4-4-4z" />
              </g>
              <path d="M87 10h8M203 10h8M207 6v8" stroke="#333" strokeWidth="2" />
            </svg>
          </StatusRight>
        </StatusBar>

        <Taskbar>
          <Start><svg width="16" height="16" fill="#fff"><path d="M0 2.300L6.500 1.400V7.500H0zM7.300 1.300L16 0v7.500H7.300zM0 8.400h6.500v6.200L0 13.700zM7.300 8.400H16V16l-8.700-1.300z" /></svg></Start>
          <Search>Pesquisar na Web e no Windows</Search>
          <TaskButton>
            <svg width="20" height="24" fill="none" stroke="#e8e8e8" strokeWidth="1.200"><path d="M3.500 5.500h11v13h-11zM2 7H-.5v10H2M16 7h2.500v10H16" /></svg>
          </TaskButton>
          <TaskButton>
            <svg width="24" height="24"><path d="M1 3h9l1.500 2H23v16H1z" fill="#f6d774" /><path d="M1 3h9v2H1z" fill="#e8b93a" /><path d="M2 6h20v8H2z" fill="#fce79b" /><path d="M5 21v-8h14v8h-4v-4H9v4z" fill="#38b0e4" /></svg>
            <RunMark />
          </TaskButton>
          <TaskButton>
            <svg width="24" height="24"><defs><linearGradient id="st" x2="0" y2="1"><stop offset="0" stopColor="#15234a" /><stop offset="1" stopColor="#1e6bb0" /></linearGradient></defs><circle cx="12" cy="12" r="11" fill="url(#st)" /><path d="M2 13l6 3 6-5" stroke="#dfe3e8" strokeWidth="3" fill="none" /><circle cx="15.500" cy="8.500" r="4" fill="none" stroke="#dfe3e8" strokeWidth="1.600" /><circle cx="15.500" cy="8.500" r="2" fill="#b9c2cc" /><circle cx="8" cy="16.500" r="2.600" fill="#dfe3e8" /></svg>
            <RunMark />
          </TaskButton>
          <TaskButton>
            <svg width="24" height="24"><circle cx="12" cy="12" r="10" fill="#0fa8e6" /><circle cx="7" cy="7" r="6" fill="#0fa8e6" /><circle cx="17" cy="17" r="6" fill="#0fa8e6" /><text x="12" y="18" textAnchor="middle" fontFamily={UI} fontWeight="700" fontSize="17" fill="#fff">S</text></svg>
            <RunMark />
          </TaskButton>
          <TaskButton><Chrome /></TaskButton>
          <TaskButton $bg="#14110d">
            <svg width="24" height="24"><circle cx="12" cy="12" r="11" fill="#000" /><path d="M7 7h15l-1.500 2.500H9.500L8.500 11h4L11 13H7l-3.500 4H1l4-5H2.500L4 10h2z" fill="#eee" /><path d="M13.500 11h2.500l-4 6h-2.500zM17.500 11H20l-4 6h-2.500z" fill="#eee" /></svg>
          </TaskButton>
          <TaskButton>
            <svg width="24" height="24"><defs><linearGradient id="cc" x2="0" y2="1"><stop offset="0" stopColor="#20243a" /><stop offset=".45" stopColor="#3a3d4c" /><stop offset="1" stopColor="#747679" /></linearGradient></defs><rect x="1" y="1" width="22" height="22" fill="url(#cc)" /><path d="M8 3c-4 3 0 3-2 6s2 4 4 3-2 6 3 6 3-6 0-7-4-6 0-7M15 3c4 2 2 3 3 6s-1 4-4 3M3 9q3-1 4 1M21 9q-3-1-4 1" fill="none" stroke="#2b42cc" strokeWidth="1" /></svg>
            <RunMark />
          </TaskButton>
          <TaskButton><Chrome /><RunMark /></TaskButton>
          <TaskButton $bg="#343434">
            <svg width="24" height="24"><rect x="0" y="1" width="21" height="21" rx="1" fill="#cfe8cb" /><path d="M0 1h21v4H0z" fill="#7dbb7c" /><path d="M12 4h8v14h-8z" fill="#a9d4a5" /><path d="M10 14l11-3 1.500 9-10 2z" fill="#f7fbf6" stroke="#8abf88" strokeWidth=".7" /><path d="M4 5l9 12M13 4L4 17" stroke="#2a8a3b" strokeWidth="3.200" /></svg>
            <RunMark $w={49} />
          </TaskButton>
          <Tray>
            <svg width="126" height="40" fill="none" stroke="#f2f2f2" strokeWidth="1.200">
              <path d="M2.500 22.500l5.500-5.500L13.500 22.500" strokeWidth="1.500" />
              <rect x="24.500" y="12.500" width="15" height="15" rx="1" fill="#e8731c" stroke="#c85a0c" />
              <path d="M32 14c-2 2 2 3 0 5M35 16c-2 1 0 2-1 3M28 21h8M28 23.500h8M28 26h9M36 20q3 0 0 3" />
              <path d="M48.500 17.500h3l4-4v13l-4-4h-3zM58 17q2 3 0 6M60.500 15q3.500 5 0 10M63 13.500q4 6.500 0 13" />
              <path d="M78 14.500h9.500v9h-11.500V18M79 26.500h7M82.500 23.500v3M72.500 12.500h4v4h-4zM74.500 16.500v2.500" />
              <path d="M101 24.500h-4.500v-12h14v6M99 15.500h9M99 18.500h6M99 21.500h3" />
              <circle cx="107.500" cy="23" r="4.200" /><path d="M105.500 23h4" />
            </svg>
          </Tray>
          <Clock>01:01<br />07/06/2016</Clock>
          <DesktopEdge />
        </Taskbar>
      </Window>
    </>
  );
}
